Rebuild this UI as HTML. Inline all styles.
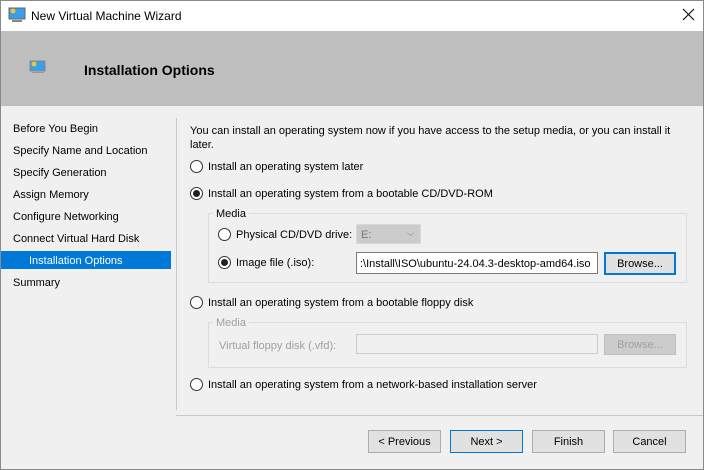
<!DOCTYPE html>
<html><head><style>
*{margin:0;padding:0;box-sizing:border-box}
body{width:704px;height:470px;background:#f0f0f0;font-family:"Liberation Sans",sans-serif;font-size:11px;color:#000;position:relative;overflow:hidden}
.a{position:absolute;white-space:nowrap}
.t{margin-top:1px}
.win{position:absolute;left:0;top:0;width:704px;height:470px;border:1px solid #8a8a8a}
.rad{position:absolute;width:13px;height:13px;border:1px solid #333;border-radius:50%;background:#fff}
.rad.on::after{content:"";position:absolute;left:2px;top:2px;width:7px;height:7px;border-radius:50%;background:#222}
.btn{position:absolute;height:23px;border:1px solid #adadad;background:#e1e1e1;text-align:center;line-height:22px}
.grp{position:absolute;border:1px solid #dcdcdc}
.dis{color:#a0a0a0}
</style></head><body>
<div class="win"></div>
<div class="a" style="left:1px;top:1px;width:702px;height:30px;background:#fff"></div>
<svg class="a" style="left:8px;top:7px" width="18" height="16"><rect x="1" y="1" width="16" height="11" fill="#3a9ee8" stroke="#666"/><circle cx="5" cy="4" r="2.5" fill="#f3c040"/><rect x="4" y="13" width="10" height="2" fill="#888"/></svg>
<div class="a" style="left:31px;top:9px;font-size:12px">New Virtual Machine Wizard</div>
<svg class="a" style="left:682px;top:8px" width="13" height="13"><path d="M1 1L12 12M12 1L1 12" stroke="#111" stroke-width="1.2"/></svg>
<div class="a" style="left:1px;top:31px;width:702px;height:75px;background:#bfbfbf"></div>
<svg class="a" style="left:29px;top:60px" width="18" height="15"><rect x="1" y="1" width="15" height="10" fill="#3a9ee8" stroke="#888"/><circle cx="5" cy="4" r="2.5" fill="#f3c040"/><rect x="3" y="12" width="12" height="1" fill="#999"/></svg>
<div class="a" style="left:84px;top:62px;font-size:14px;font-weight:bold">Installation Options</div>

<div class="a t" style="left:13px;top:122px">Before You Begin</div>
<div class="a t" style="left:13px;top:144px">Specify Name and Location</div>
<div class="a t" style="left:13px;top:166px">Specify Generation</div>
<div class="a t" style="left:13px;top:188px">Assign Memory</div>
<div class="a t" style="left:13px;top:210px">Configure Networking</div>
<div class="a t" style="left:13px;top:232px">Connect Virtual Hard Disk</div>
<div class="a" style="left:1px;top:251px;width:170px;height:18px;background:#0078d7"></div>
<div class="a t" style="left:29px;top:254px;color:#fff">Installation Options</div>
<div class="a t" style="left:13px;top:276px">Summary</div>
<div class="a" style="left:176px;top:118px;width:1px;height:292px;background:#c8c8c8"></div>

<div class="a t" style="left:190px;top:123px;line-height:14px">You can install an operating system now if you have access to the setup media, or you can install it<br>later.</div>
<div class="rad" style="left:190px;top:160px"></div><div class="a t" style="left:208px;top:160px">Install an operating system later</div>
<div class="rad on" style="left:190px;top:187px"></div><div class="a t" style="left:208px;top:187px">Install an operating system from a bootable CD/DVD-ROM</div>
<div class="grp" style="left:208px;top:213px;width:479px;height:70px"></div>
<div class="a t" style="left:213px;top:207px;background:#f0f0f0;padding:0 3px">Media</div>
<div class="rad" style="left:218px;top:228px"></div><div class="a t" style="left:236px;top:228px">Physical CD/DVD drive:</div>
<div class="a" style="left:356px;top:224px;width:65px;height:20px;background:#ccc;border:1px solid #d8d8d8;color:#777;padding:4px 4px">E:<span style="position:absolute;right:6px;top:3px;font-size:9px">⌵</span></div>
<div class="rad on" style="left:218px;top:256px"></div><div class="a t" style="left:236px;top:256px">Image file (.iso):</div>
<div class="a" style="left:356px;top:252px;width:242px;height:22px;background:#fff;border:1px solid #7a7a7a;padding:5px 3px;overflow:hidden">:\Install\ISO\ubuntu-24.04.3-desktop-amd64.iso</div>
<div class="btn" style="left:604px;top:252px;width:72px;border:2px solid #0078d7;line-height:20px">Browse...</div>
<div class="rad" style="left:190px;top:296px"></div><div class="a t" style="left:208px;top:296px">Install an operating system from a bootable floppy disk</div>
<div class="grp" style="left:208px;top:322px;width:479px;height:46px"></div>
<div class="a dis t" style="left:213px;top:316px;background:#f0f0f0;padding:0 3px">Media</div>
<div class="a dis t" style="left:219px;top:339px">Virtual floppy disk (.vfd):</div>
<div class="a" style="left:356px;top:334px;width:242px;height:20px;border:1px solid #ccc"></div>
<div class="btn dis" style="left:604px;top:334px;width:72px;height:21px;background:#ccc;border-color:#bfbfbf;line-height:20px">Browse...</div>
<div class="rad" style="left:190px;top:378px"></div><div class="a t" style="left:208px;top:378px">Install an operating system from a network-based installation server</div>

<div class="a" style="left:176px;top:415px;width:527px;height:1px;background:#c8c8c8"></div>
<div class="btn" style="left:368px;top:430px;width:73px">&lt; Previous</div>
<div class="btn" style="left:450px;top:430px;width:73px;border:1px solid #0078d7">Next &gt;</div>
<div class="btn" style="left:532px;top:430px;width:73px">Finish</div>
<div class="btn" style="left:613px;top:430px;width:73px">Cancel</div>
</body></html>
